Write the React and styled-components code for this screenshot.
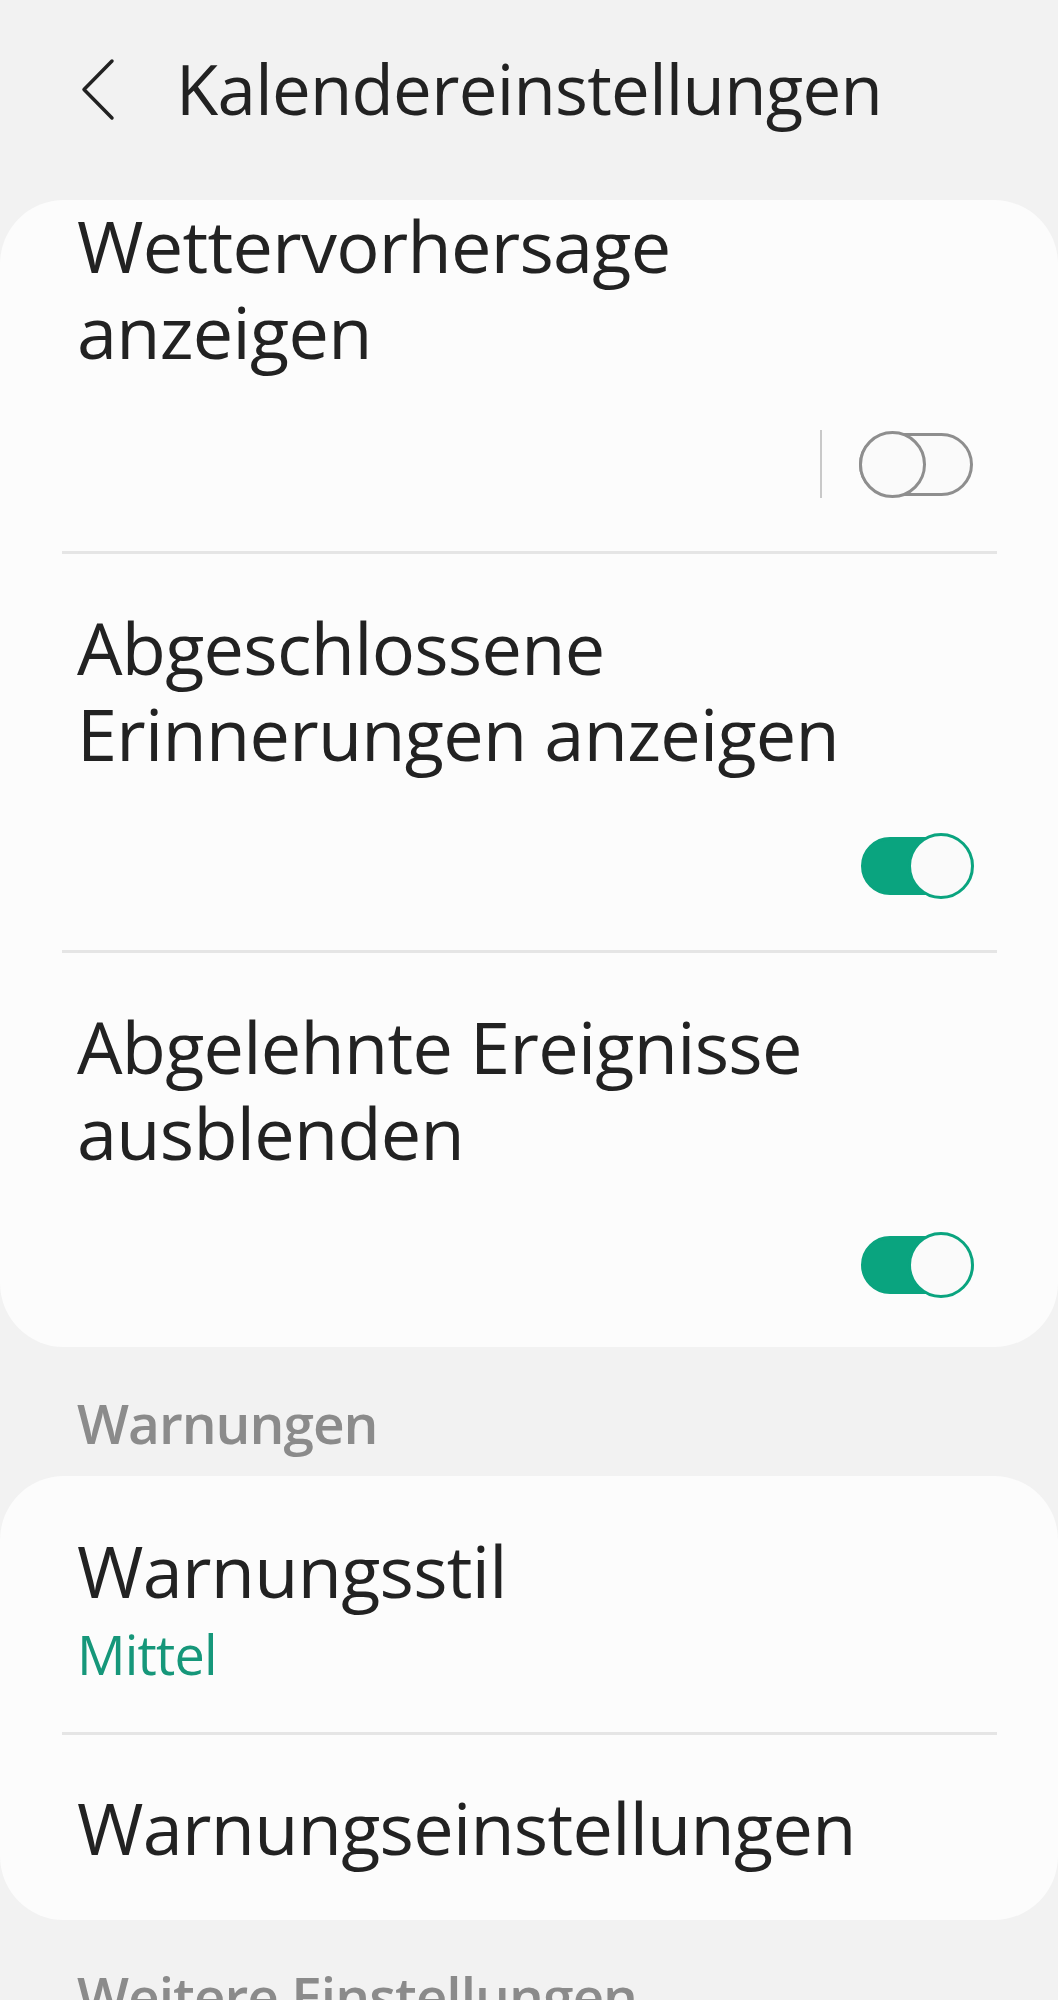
import React from "react";
import styled, { createGlobalStyle } from "styled-components";

const GlobalStyle = createGlobalStyle`
  html, body {
    margin: 0;
    padding: 0;
    background: #f2f2f2;
  }
  body {
    font-family: "Open Sans", "Noto Sans", sans-serif;
    color: #222222;
    overflow: hidden;
  }
`;

const Page = styled.div`
  width: 1058px;
  min-height: 2000px;
  background: #f2f2f2;
`;

const Header = styled.div`
  display: flex;
  align-items: center;
  height: 200px;
  box-sizing: border-box;
  padding: 54px 0 77px 80px;
`;

const BackButton = styled.div`
  display: flex;
  width: 96px;
  height: 69px;
  align-items: center;
`;

const Title = styled.h1`
  margin: 0;
  font-size: 69px;
  line-height: 69px;
  font-weight: 400;
  letter-spacing: -0.7px;
  color: #222222;
`;

const Card = styled.div`
  background: #fcfcfc;
  border-radius: 64px;
  overflow: hidden;
`;

const Item = styled.div`
  display: flex;
  flex-direction: column;
  padding: ${(p) => p.$top ?? 50}px 85px ${(p) => p.$bottom ?? 50}px 77px;
`;

const ItemTitle = styled.div`
  font-size: 72px;
  line-height: 86px;
  letter-spacing: -0.7px;
  color: #222222;
`;

const SubValue = styled.div`
  margin-top: 11px;
  font-size: 54px;
  line-height: 60px;
  letter-spacing: -0.8px;
  color: #16977a;
`;

const Divider = styled.div`
  height: 3px;
  margin: 0 61px 0 62px;
  background: #e5e5e5;
`;

const ToggleRow = styled.div`
  display: flex;
  justify-content: flex-end;
  align-items: center;
  gap: 37px;
  margin-top: 56px;
  height: 68px;
`;

const VLine = styled.div`
  width: 2px;
  height: 68px;
  background: #c9c9c9;
`;

const Track = styled.div`
  position: relative;
  box-sizing: border-box;
  width: ${(p) => (p.$on ? 112 : 114)}px;
  height: ${(p) => (p.$on ? 58 : 63)}px;
  border-radius: 32px;
  background: ${(p) => (p.$on ? "#0aa47f" : "#fafafa")};
  border: 3px solid ${(p) => (p.$on ? "#0aa47f" : "#8e8e8e")};
`;

const Thumb = styled.div`
  position: absolute;
  top: 50%;
  ${(p) => (p.$on ? "right: -4px;" : "left: -3px;")}
  box-sizing: border-box;
  width: ${(p) => (p.$on ? 66 : 67)}px;
  height: ${(p) => (p.$on ? 66 : 67)}px;
  margin-top: ${(p) => (p.$on ? -33 : -33.5)}px;
  border-radius: 50%;
  background: #fafafa;
  border: 3px solid ${(p) => (p.$on ? "#0aa47f" : "#8e8e8e")};
`;

const SectionLabel = styled.div`
  padding: 48px 0 25px 77px;
  font-size: 55px;
  line-height: 56px;
  font-weight: 600;
  letter-spacing: -1px;
  color: #8b8b8b;
`;

const Toggle = ({ on }) => (
  <ToggleRow>
    {!on && <VLine />}
    <Track $on={on}>
      <Thumb $on={on} />
    </Track>
  </ToggleRow>
);

const switches = [
  { id: 1, label: ["Wettervorhersage", "anzeigen"], on: false, top: 2, bottom: 53 },
  { id: 2, label: ["Abgeschlossene", "Erinnerungen anzeigen"], on: true },
  { id: 3, label: ["Abgelehnte Ereignisse", "ausblenden"], on: true, bottom: 48 },
];

const App = () => {
  return (
    <>
      <GlobalStyle />
      <Page>
        <Header>
          <BackButton>
            <svg width="36" height="64" viewBox="0 0 36 64">
              <polyline
                points="32,4 4,32.5 32,61"
                fill="none"
                stroke="#222"
                strokeWidth="3.5"
                strokeLinecap="round"
                strokeLinejoin="round"
              />
            </svg>
          </BackButton>
          <Title>Kalendereinstellungen</Title>
        </Header>

        <Card>
          {switches.map(({ id, label, on, top, bottom }, i) => (
            <React.Fragment key={id}>
              {i > 0 && <Divider />}
              <Item $top={top} $bottom={bottom}>
                <ItemTitle>
                  {label[0]}
                  <br />
                  {label[1]}
                </ItemTitle>
                <Toggle on={on} />
              </Item>
            </React.Fragment>
          ))}
        </Card>

        <SectionLabel>Warnungen</SectionLabel>
        <Card>
          <Item $top={51} $bottom={48}>
            <ItemTitle>Warnungsstil</ItemTitle>
            <SubValue>Mittel</SubValue>
          </Item>
          <Divider />
          <Item $top={49} $bottom={50}>
            <ItemTitle>Warnungseinstellungen</ItemTitle>
          </Item>
        </Card>

        <SectionLabel>Weitere Einstellungen</SectionLabel>
      </Page>
    </>
  );
};

export default App;
